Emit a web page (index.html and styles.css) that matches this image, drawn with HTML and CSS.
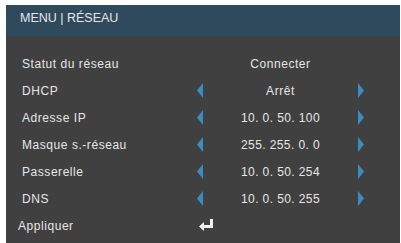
FILE: index.html
```html
<!DOCTYPE html>
<html lang="fr">
<head>
    <meta charset="UTF-8">
    <title>MENU | RÉSEAU</title>
    <link rel="stylesheet" href="styles.css">
</head>
<body>
    <div class="osd">
        <div class="osd-header">MENU | RÉSEAU</div>
        <div class="osd-body">
            <div class="row">
                <span class="label">Statut du réseau</span>
                <span></span>
                <span class="value">Connecter</span>
                <span></span>
            </div>
            <div class="row">
                <span class="label">DHCP</span>
                <svg class="arrow" viewBox="0 0 6 15"><polygon points="6,0 6,15 0,7.5"/></svg>
                <span class="value">Arrêt</span>
                <svg class="arrow" viewBox="0 0 6 15"><polygon points="0,0 0,15 6,7.5"/></svg>
            </div>
            <div class="row">
                <span class="label">Adresse IP</span>
                <svg class="arrow" viewBox="0 0 6 15"><polygon points="6,0 6,15 0,7.5"/></svg>
                <span class="value num">10. 0. 50. 100</span>
                <svg class="arrow" viewBox="0 0 6 15"><polygon points="0,0 0,15 6,7.5"/></svg>
            </div>
            <div class="row">
                <span class="label">Masque s.-réseau</span>
                <svg class="arrow" viewBox="0 0 6 15"><polygon points="6,0 6,15 0,7.5"/></svg>
                <span class="value num">255. 255. 0. 0</span>
                <svg class="arrow" viewBox="0 0 6 15"><polygon points="0,0 0,15 6,7.5"/></svg>
            </div>
            <div class="row">
                <span class="label">Passerelle</span>
                <svg class="arrow" viewBox="0 0 6 15"><polygon points="6,0 6,15 0,7.5"/></svg>
                <span class="value num">10. 0. 50. 254</span>
                <svg class="arrow" viewBox="0 0 6 15"><polygon points="0,0 0,15 6,7.5"/></svg>
            </div>
            <div class="row">
                <span class="label">DNS</span>
                <svg class="arrow" viewBox="0 0 6 15"><polygon points="6,0 6,15 0,7.5"/></svg>
                <span class="value num">10. 0. 50. 255</span>
                <svg class="arrow" viewBox="0 0 6 15"><polygon points="0,0 0,15 6,7.5"/></svg>
            </div>
            <div class="row apply">
                <span class="label">Appliquer</span>
                <svg class="enter" viewBox="0 0 16 13">
                    <path d="M12 0h3v9H6v3L1 7.5 6 3v3h6z"/>
                </svg>
            </div>
        </div>
    </div>
</body>
</html>
```

FILE: styles.css
```css
html {
    background: #ffffff;
}

body {
    margin: 0;
    padding: 5px 1px 0 6px;
    font-family: "Liberation Sans", Arial, sans-serif;
    color: #e6e6e6;
}

.osd {
    height: 238px;
    background: #404040;
    overflow: hidden;
}

.osd-header {
    height: 31px;
    box-sizing: border-box;
    padding: 6px 0 0 14px;
    background: #2f4a5d;
    font-size: 12.5px;
    line-height: 14px;
}

.osd-body {
    padding: 14px 0 0 16px;
}

.row {
    display: grid;
    grid-template-columns: 175px 6px 155px 6px;
    align-items: center;
    height: 27px;
    font-size: 12px;
    letter-spacing: 0.55px;
}

.value {
    text-align: center;
}

.value.num {
    letter-spacing: 0.4px;
}

.arrow {
    width: 6px;
    height: 15px;
    fill: #3b8cc0;
}

.apply {
    grid-template-columns: 175px 16px;
}

.apply .label {
    margin-left: -4px;
}

.enter {
    width: 16px;
    height: 13px;
    margin-left: 1px;
    fill: #f2f2f2;
}
```
